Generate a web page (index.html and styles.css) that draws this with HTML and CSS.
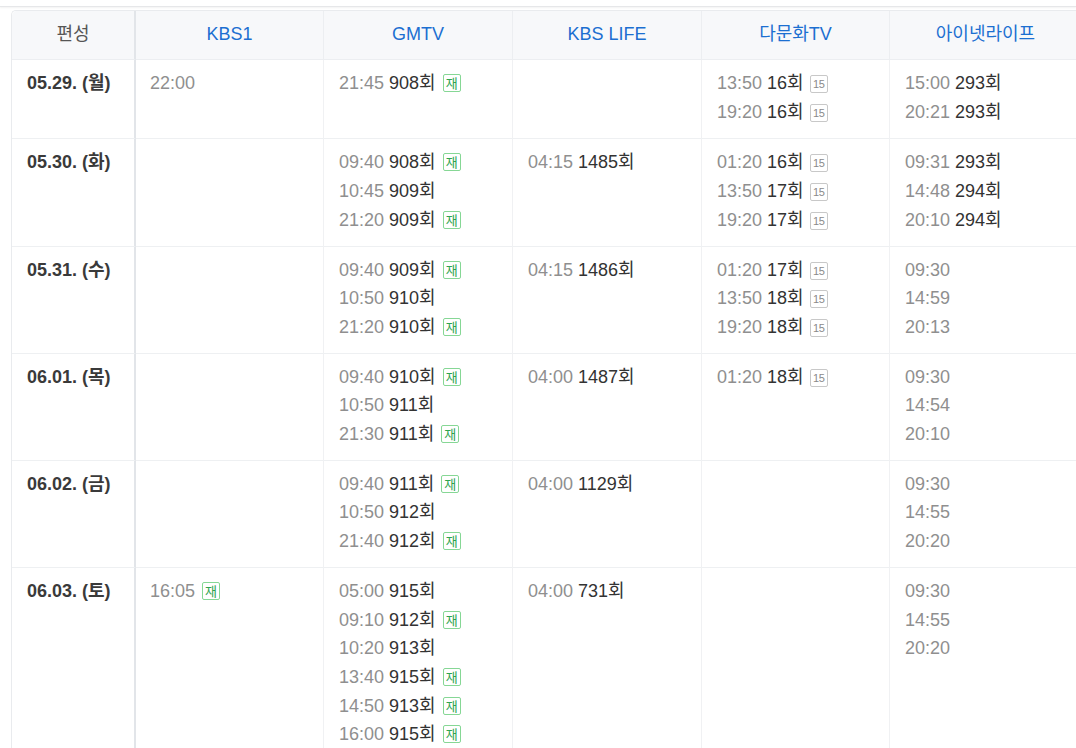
FILE: index.html
```html
<!DOCTYPE html>
<html lang="ko">
<head>
<meta charset="utf-8">
<title>편성표</title>
<link rel="stylesheet" href="styles.css">
</head>
<body>
<div class="topbar"></div>
<div class="wrap">
<table class="sched">
  <colgroup>
    <col class="c-date"><col class="c-ch"><col class="c-ch2"><col class="c-ch2"><col class="c-ch"><col class="c-last">
  </colgroup>
  <thead>
    <tr>
      <th class="date">편성</th>
      <th>KBS1</th>
      <th>GMTV</th>
      <th>KBS LIFE</th>
      <th>다문화TV</th>
      <th>아이넷라이프</th>
    </tr>
  </thead>
  <tbody>
    <tr>
      <td class="date">05.29. (월)</td>
      <td><div class="it"><span class="t">22:00</span></div></td>
      <td><div class="it"><span class="t">21:45</span> <span class="e">908회</span><span class="re">재</span></div></td>
      <td></td>
      <td>
        <div class="it"><span class="t">13:50</span> <span class="e">16회</span><span class="age">15</span></div>
        <div class="it"><span class="t">19:20</span> <span class="e">16회</span><span class="age">15</span></div>
      </td>
      <td>
        <div class="it"><span class="t">15:00</span> <span class="e">293회</span></div>
        <div class="it"><span class="t">20:21</span> <span class="e">293회</span></div>
      </td>
    </tr>
    <tr>
      <td class="date">05.30. (화)</td>
      <td></td>
      <td>
        <div class="it"><span class="t">09:40</span> <span class="e">908회</span><span class="re">재</span></div>
        <div class="it"><span class="t">10:45</span> <span class="e">909회</span></div>
        <div class="it"><span class="t">21:20</span> <span class="e">909회</span><span class="re">재</span></div>
      </td>
      <td><div class="it"><span class="t">04:15</span> <span class="e">1485회</span></div></td>
      <td>
        <div class="it"><span class="t">01:20</span> <span class="e">16회</span><span class="age">15</span></div>
        <div class="it"><span class="t">13:50</span> <span class="e">17회</span><span class="age">15</span></div>
        <div class="it"><span class="t">19:20</span> <span class="e">17회</span><span class="age">15</span></div>
      </td>
      <td>
        <div class="it"><span class="t">09:31</span> <span class="e">293회</span></div>
        <div class="it"><span class="t">14:48</span> <span class="e">294회</span></div>
        <div class="it"><span class="t">20:10</span> <span class="e">294회</span></div>
      </td>
    </tr>
    <tr>
      <td class="date">05.31. (수)</td>
      <td></td>
      <td>
        <div class="it"><span class="t">09:40</span> <span class="e">909회</span><span class="re">재</span></div>
        <div class="it"><span class="t">10:50</span> <span class="e">910회</span></div>
        <div class="it"><span class="t">21:20</span> <span class="e">910회</span><span class="re">재</span></div>
      </td>
      <td><div class="it"><span class="t">04:15</span> <span class="e">1486회</span></div></td>
      <td>
        <div class="it"><span class="t">01:20</span> <span class="e">17회</span><span class="age">15</span></div>
        <div class="it"><span class="t">13:50</span> <span class="e">18회</span><span class="age">15</span></div>
        <div class="it"><span class="t">19:20</span> <span class="e">18회</span><span class="age">15</span></div>
      </td>
      <td>
        <div class="it"><span class="t">09:30</span></div>
        <div class="it"><span class="t">14:59</span></div>
        <div class="it"><span class="t">20:13</span></div>
      </td>
    </tr>
    <tr>
      <td class="date">06.01. (목)</td>
      <td></td>
      <td>
        <div class="it"><span class="t">09:40</span> <span class="e">910회</span><span class="re">재</span></div>
        <div class="it"><span class="t">10:50</span> <span class="e">911회</span></div>
        <div class="it"><span class="t">21:30</span> <span class="e">911회</span><span class="re">재</span></div>
      </td>
      <td><div class="it"><span class="t">04:00</span> <span class="e">1487회</span></div></td>
      <td>
        <div class="it"><span class="t">01:20</span> <span class="e">18회</span><span class="age">15</span></div>
      </td>
      <td>
        <div class="it"><span class="t">09:30</span></div>
        <div class="it"><span class="t">14:54</span></div>
        <div class="it"><span class="t">20:10</span></div>
      </td>
    </tr>
    <tr>
      <td class="date">06.02. (금)</td>
      <td></td>
      <td>
        <div class="it"><span class="t">09:40</span> <span class="e">911회</span><span class="re">재</span></div>
        <div class="it"><span class="t">10:50</span> <span class="e">912회</span></div>
        <div class="it"><span class="t">21:40</span> <span class="e">912회</span><span class="re">재</span></div>
      </td>
      <td><div class="it"><span class="t">04:00</span> <span class="e">1129회</span></div></td>
      <td></td>
      <td>
        <div class="it"><span class="t">09:30</span></div>
        <div class="it"><span class="t">14:55</span></div>
        <div class="it"><span class="t">20:20</span></div>
      </td>
    </tr>
    <tr>
      <td class="date">06.03. (토)</td>
      <td><div class="it"><span class="t">16:05</span><span class="re">재</span></div></td>
      <td>
        <div class="it"><span class="t">05:00</span> <span class="e">915회</span></div>
        <div class="it"><span class="t">09:10</span> <span class="e">912회</span><span class="re">재</span></div>
        <div class="it"><span class="t">10:20</span> <span class="e">913회</span></div>
        <div class="it"><span class="t">13:40</span> <span class="e">915회</span><span class="re">재</span></div>
        <div class="it"><span class="t">14:50</span> <span class="e">913회</span><span class="re">재</span></div>
        <div class="it"><span class="t">16:00</span> <span class="e">915회</span><span class="re">재</span></div>
      </td>
      <td><div class="it"><span class="t">04:00</span> <span class="e">731회</span></div></td>
      <td></td>
      <td>
        <div class="it"><span class="t">09:30</span></div>
        <div class="it"><span class="t">14:55</span></div>
        <div class="it"><span class="t">20:20</span></div>
      </td>
    </tr>
  </tbody>
</table>
</div>
</body>
</html>
```

FILE: styles.css
```css
html, body {
  margin: 0;
  padding: 0;
  overflow: hidden;
  background: #fff;
}
body {
  font-family: "Liberation Sans", Arial, "Noto Sans CJK KR", sans-serif;
  font-size: 18px;
  color: #333;
}
.topbar {
  height: 6px;
  border-bottom: 1px solid #e6e7e9;
  box-shadow: 0 1px 2px rgba(0, 0, 0, 0.05);
}
.wrap {
  padding: 3px 0 0 11px;
}
.sched {
  border-collapse: separate;
  border-spacing: 0;
  table-layout: fixed;
  width: 1070px;
  border-top: 1px solid #e9ebee;
  border-left: 1px solid #e9ebee;
  border-top-left-radius: 5px;
}
.c-date { width: 124px; }
.c-ch { width: 188px; }
.c-ch2 { width: 189px; }
.c-last { width: 192px; }

.sched th {
  background: #f7f8fa;
  font-weight: normal;
  color: #1c6fd1;
  line-height: 28px;
  padding: 9px 0 11px;
  text-align: center;
  border-bottom: 1px solid #eceef1;
  border-right: 1px solid #eceef1;
}
.sched th:first-child {
  border-top-left-radius: 5px;
}
.sched th.date {
  color: #555;
}
.sched td {
  vertical-align: top;
  padding: 9px 15px 11px 15px;
  line-height: 28.7px;
  border-bottom: 1px solid #eef0f2;
  border-right: 1px solid #f0f1f3;
  white-space: nowrap;
}
.sched tbody tr:first-child td {
  padding-bottom: 12px;
}
.sched .date {
  border-right: 2px solid #e2e5e9;
}
.sched td.date {
  font-weight: bold;
  color: #3a3a3a;
  padding-left: 15px;
  padding-right: 0;
}
.sched td:nth-child(2) {
  padding-left: 14px;
}
.t {
  color: #8f8f8f;
}
.e {
  color: #333;
}
.re, .age {
  display: inline-block;
  box-sizing: border-box;
  height: 18px;
  line-height: 16px;
  border-radius: 2px;
  text-align: center;
  vertical-align: 1px;
  margin-left: 7px;
}
.re {
  width: 18px;
  font-size: 13px;
  color: #2ea44f;
  border: 1px solid #86d795;
  font-family: "Noto Sans CJK KR", sans-serif;
}
.age {
  width: 18px;
  font-size: 11px;
  letter-spacing: -0.5px;
  color: #8a8a8a;
  border: 1px solid #c8c8c8;
  margin-left: 6px;
}
```
